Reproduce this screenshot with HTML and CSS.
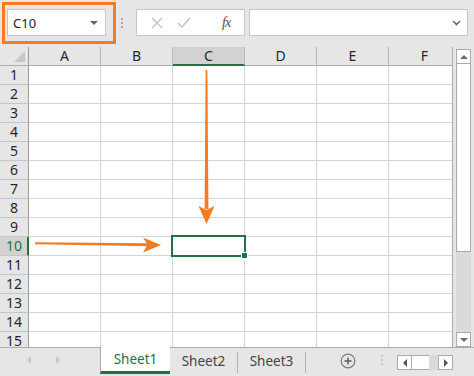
FILE: index.html
```html
<!DOCTYPE html>
<html lang="en">
    <head>
        <meta charset="UTF-8" />
        <title>Book1 - Excel</title>
        <link rel="stylesheet" href="styles.css">
    </head>
    <body>
        <div class="app">
            <div class="toolbar">
                <div class="name-box">
                    <span>C10</span>
                    <span class="caret"></span>
                </div>
                <div class="grip"><i></i><i></i><i></i></div>
                <div class="fx-buttons">
                    <svg class="btn-x" width="12" height="12" viewBox="0 0 12 12">
                        <path d="M1 1 L11 11 M11 1 L1 11" stroke="#c4c4c4" stroke-width="1.4" fill="none" />
                    </svg>
                    <svg class="btn-ok" width="14" height="12" viewBox="0 0 14 12">
                        <path d="M1 6 L5 10 L13 1" stroke="#c4c4c4" stroke-width="1.6" fill="none" />
                    </svg>
                    <span class="btn-fx">fx</span>
                </div>
                <div class="formula-input">
                    <svg width="9" height="6" viewBox="0 0 9 6">
                        <path d="M1 1 L4.5 4.5 L8 1" stroke="#6a6a6a" stroke-width="1.6" fill="none" />
                    </svg>
                </div>
                <div class="name-highlight"></div>
            </div>

            <div class="sheet">
                <div class="grid">
                    <div class="row head">
                        <div class="rh corner"><span class="corner-tri"></span></div>
                        <div class="ch">A</div>
                        <div class="ch">B</div>
                        <div class="ch active">C</div>
                        <div class="ch">D</div>
                        <div class="ch">E</div>
                        <div class="ch">F</div>
                    </div>
                    <div class="row"><div class="rh">1</div><div class="c"></div><div class="c"></div><div class="c"></div><div class="c"></div><div class="c"></div><div class="c"></div></div>
                    <div class="row"><div class="rh">2</div><div class="c"></div><div class="c"></div><div class="c"></div><div class="c"></div><div class="c"></div><div class="c"></div></div>
                    <div class="row"><div class="rh">3</div><div class="c"></div><div class="c"></div><div class="c"></div><div class="c"></div><div class="c"></div><div class="c"></div></div>
                    <div class="row"><div class="rh">4</div><div class="c"></div><div class="c"></div><div class="c"></div><div class="c"></div><div class="c"></div><div class="c"></div></div>
                    <div class="row"><div class="rh">5</div><div class="c"></div><div class="c"></div><div class="c"></div><div class="c"></div><div class="c"></div><div class="c"></div></div>
                    <div class="row"><div class="rh">6</div><div class="c"></div><div class="c"></div><div class="c"></div><div class="c"></div><div class="c"></div><div class="c"></div></div>
                    <div class="row"><div class="rh">7</div><div class="c"></div><div class="c"></div><div class="c"></div><div class="c"></div><div class="c"></div><div class="c"></div></div>
                    <div class="row"><div class="rh">8</div><div class="c"></div><div class="c"></div><div class="c"></div><div class="c"></div><div class="c"></div><div class="c"></div></div>
                    <div class="row"><div class="rh">9</div><div class="c"></div><div class="c"></div><div class="c"></div><div class="c"></div><div class="c"></div><div class="c"></div></div>
                    <div class="row"><div class="rh active">10</div><div class="c"></div><div class="c"></div><div class="c"></div><div class="c"></div><div class="c"></div><div class="c"></div></div>
                    <div class="row"><div class="rh">11</div><div class="c"></div><div class="c"></div><div class="c"></div><div class="c"></div><div class="c"></div><div class="c"></div></div>
                    <div class="row"><div class="rh">12</div><div class="c"></div><div class="c"></div><div class="c"></div><div class="c"></div><div class="c"></div><div class="c"></div></div>
                    <div class="row"><div class="rh">13</div><div class="c"></div><div class="c"></div><div class="c"></div><div class="c"></div><div class="c"></div><div class="c"></div></div>
                    <div class="row"><div class="rh">14</div><div class="c"></div><div class="c"></div><div class="c"></div><div class="c"></div><div class="c"></div><div class="c"></div></div>
                    <div class="row"><div class="rh">15</div><div class="c"></div><div class="c"></div><div class="c"></div><div class="c"></div><div class="c"></div><div class="c"></div></div>

                    <div class="selection"><span class="fill-handle"></span></div>
                </div>

                <div class="vscroll">
                    <div class="sb-btn"><span class="tri-up"></span></div>
                    <div class="sb-thumb"></div>
                    <div class="sb-track"></div>
                    <div class="sb-btn"><span class="tri-down"></span></div>
                </div>
            </div>

            <div class="tabbar">
                <div class="tab-nav">
                    <span class="tri-left light"></span>
                    <span class="tri-right light"></span>
                </div>
                <div class="tab active">Sheet1</div>
                <div class="tab">Sheet2</div>
                <div class="tab">Sheet3</div>
                <div class="add-sheet">
                    <svg width="16" height="16" viewBox="0 0 16 16">
                        <circle cx="8" cy="8" r="6.8" stroke="#7a7a7a" stroke-width="1.2" fill="none" />
                        <path d="M8 4.5 V11.5 M4.5 8 H11.5" stroke="#5a5a5a" stroke-width="1.4" />
                    </svg>
                </div>
                <div class="grip tab-grip"><i></i><i></i><i></i></div>
                <div class="hscroll">
                    <div class="sb-btn"><span class="tri-left"></span></div>
                    <div class="h-thumb"></div>
                    <div class="h-track"></div>
                    <div class="sb-btn"><span class="tri-right"></span></div>
                </div>
            </div>

            <!-- annotation arrows -->
            <svg class="arrows" width="474" height="376" viewBox="0 0 474 376">
                <path d="M205.6 70 L207.4 70 L208.4 209 L204.6 209 Z" fill="#f47b20" />
                <path d="M198.5 206 L206.5 210 L214.5 206 L206.5 224 Z" fill="#f47b20" />
                <path d="M35 242.3 L148 243.3 L148 246.3 L35 244.3 Z" fill="#f47b20" />
                <path d="M143 237.5 L147.5 244.8 L143 252.5 L161 245 Z" fill="#f47b20" />
            </svg>
        </div>
    </body>
</html>
```

FILE: styles.css
```css
* {
    margin: 0;
    padding: 0;
    box-sizing: border-box;
}

body {
    font-family: "Noto Sans", "Open Sans", sans-serif;
    background: #e6e6e6;
    color: #262626;
    width: 474px;
    height: 376px;
    overflow: hidden;
}

.app {
    position: relative;
    width: 474px;
    height: 376px;
    display: flex;
    flex-direction: column;
}

/* ---- formula bar ---- */

.toolbar {
    position: relative;
    height: 47px;
    display: flex;
    align-items: flex-start;
    padding: 9px 0 0 7px;
}

.name-box {
    width: 99px;
    height: 27px;
    background: #fff;
    border: 1px solid #c6c6c6;
    display: flex;
    align-items: center;
    justify-content: space-between;
    padding: 0 7px 0 5px;
    font-size: 13px;
    color: #222;
}

.caret {
    width: 0;
    height: 0;
    border-left: 4px solid transparent;
    border-right: 4px solid transparent;
    border-top: 4px solid #666;
}

.name-highlight {
    position: absolute;
    left: 2px;
    top: 2px;
    width: 114px;
    height: 42px;
    border: 3px solid #f47b20;
}

.grip {
    display: flex;
    flex-direction: column;
    gap: 2px;
    margin: 9px 13px 0 15px;
}

.grip i {
    display: block;
    width: 2px;
    height: 2px;
    background: #a8a8a8;
}

.fx-buttons {
    width: 109px;
    height: 27px;
    background: #fff;
    border: 1px solid #c6c6c6;
    display: flex;
    align-items: center;
    padding-left: 14px;
}

.btn-ok {
    margin-left: 14px;
}

.btn-fx {
    margin-left: 31px;
    font-family: "Liberation Serif", serif;
    font-style: italic;
    font-size: 14px;
    color: #505050;
    letter-spacing: -1px;
}

.formula-input {
    width: 219px;
    height: 27px;
    margin-left: 4px;
    background: #fff;
    border: 1px solid #c6c6c6;
    display: flex;
    align-items: center;
    justify-content: flex-end;
    padding-right: 6px;
}

/* ---- sheet ---- */

.sheet {
    height: 300px;
    display: flex;
}

.grid {
    position: relative;
    width: 453px;
    height: 300px;
    overflow: hidden;
    background: #fff;
    border-right: 1px solid #ababab;
}

.row {
    display: flex;
    height: 19px;
}

.rh {
    flex: none;
    width: 29px;
    height: 19px;
    background: #e6e6e6;
    border-right: 1px solid #9c9c9c;
    border-bottom: 1px solid #c6c6c6;
    text-align: center;
    font-size: 14px;
    line-height: 18px;
}

.rh.active {
    background: #d2d2d2;
    border-right: 2px solid #217346;
    color: #217346;
    padding-left: 1px;
}

.c {
    flex: none;
    width: 72px;
    height: 19px;
    border-right: 1px solid #d4d4d4;
    border-bottom: 1px solid #d4d4d4;
}

.head {
    background: #e6e6e6;
}

.head .rh {
    position: relative;
    border-bottom: 1px solid #ababab;
}

.corner-tri {
    position: absolute;
    right: 3px;
    bottom: 3px;
    width: 0;
    height: 0;
    border-left: 11px solid transparent;
    border-bottom: 11px solid #c8c8c8;
}

.ch {
    flex: none;
    width: 72px;
    height: 19px;
    border-right: 1px solid #b9b9b9;
    border-bottom: 1px solid #ababab;
    text-align: center;
    font-size: 14px;
    line-height: 18px;
}

.ch.active {
    background: #d2d2d2;
    border-bottom: 2px solid #217346;
}

.selection {
    position: absolute;
    left: 171px;
    top: 188px;
    width: 75px;
    height: 22px;
    border: 2px solid #217346;
}

.fill-handle {
    position: absolute;
    right: -4px;
    bottom: -4px;
    width: 7px;
    height: 7px;
    background: #217346;
    border: 1px solid #fff;
}

/* ---- scrollbars ---- */

.vscroll {
    width: 15px;
    margin: 2px 0 0 3px;
    display: flex;
    flex-direction: column;
    background: #dadada;
}

.sb-btn {
    flex: none;
    width: 15px;
    height: 15px;
    background: #fff;
    border: 1px solid #ababab;
    display: flex;
    align-items: center;
    justify-content: center;
}

.sb-thumb {
    height: 188px;
    background: #fff;
    border: 1px solid #ababab;
    border-top: none;
}

.sb-track {
    flex: 1;
}

.tri-up,
.tri-down {
    width: 0;
    height: 0;
    border-left: 4px solid transparent;
    border-right: 4px solid transparent;
}

.tri-up {
    border-bottom: 4px solid #6a6a6a;
}

.tri-down {
    border-top: 4px solid #6a6a6a;
}

.tri-left,
.tri-right {
    width: 0;
    height: 0;
    border-top: 4px solid transparent;
    border-bottom: 4px solid transparent;
}

.tri-left {
    border-right: 4px solid #555;
}

.tri-right {
    border-left: 4px solid #555;
}

.tri-left.light {
    border-right-color: #c8c8c8;
}

.tri-right.light {
    border-left-color: #c8c8c8;
}

/* ---- sheet tabs ---- */

.tabbar {
    height: 29px;
    border-top: 1px solid #ababab;
    display: flex;
    align-items: stretch;
}

.tab-nav {
    width: 100px;
    display: flex;
    align-items: center;
    gap: 25px;
    padding: 0 0 4px 27px;
}

.tab {
    width: 68px;
    margin-bottom: 3px;
    font-size: 13.5px;
    color: #444;
    display: flex;
    align-items: center;
    justify-content: center;
    border-right: 1px solid #b0b0b0;
    margin-top: 4px;
    padding-bottom: 4px;
}

.tab.active {
    width: 70px;
    margin-top: -1px;
    padding-bottom: 0;
    background: #fff;
    color: #217346;
    border-left: 1px solid #ababab;
    border-right: none;
    border-bottom: 3px solid #217346;
    margin-bottom: 2px;
}

.add-sheet {
    display: flex;
    align-items: center;
    margin: 0 0 3px 34px;
}

.tab-grip {
    margin: 7px 14px 0 25px;
}

.tab-grip i {
    background: #c4c4c4;
}

.hscroll {
    display: flex;
    height: 15px;
    margin-top: 7px;
}

.hscroll .sb-btn {
    width: 15px;
}

.h-thumb {
    width: 17px;
    background: #fff;
    border-top: 1px solid #ababab;
    border-bottom: 1px solid #ababab;
}

.h-track {
    width: 9px;
    background: #dadada;
}

.arrows {
    position: absolute;
    left: 0;
    top: 0;
    pointer-events: none;
}
```
